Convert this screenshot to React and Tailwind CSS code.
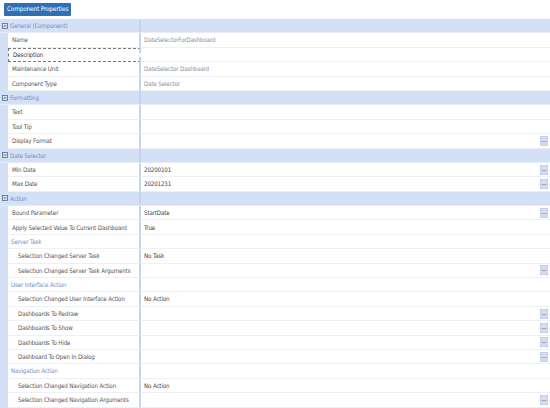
import React from "react";

const rows = [
  { type: "cat", label: "General (Component)" },
  { label: "Name", value: "DateSelectorForDashboard", dim: true },
  { label: "Description", focus: true },
  { label: "Maintenance Unit", value: "DateSelector Dashboard", dim: true },
  { label: "Component Type", value: "Date Selector", dim: true },
  { type: "cat", label: "Formatting" },
  { label: "Text" },
  { label: "Tool Tip" },
  { label: "Display Format", btn: true },
  { type: "cat", label: "Date Selector" },
  { label: "Min Date", value: "20200101", btn: true },
  { label: "Max Date", value: "20201231", btn: true },
  { type: "cat", label: "Action" },
  { label: "Bound Parameter", value: "StartDate", btn: true },
  { label: "Apply Selected Value To Current Dashboard", value: "True" },
  { type: "sub", label: "Server Task" },
  { label: "Selection Changed Server Task", value: "No Task", indent: true },
  { label: "Selection Changed Server Task Arguments", indent: true, btn: true },
  { type: "sub", label: "User Interface Action" },
  { label: "Selection Changed User Interface Action", value: "No Action", indent: true },
  { label: "Dashboards To Redraw", indent: true, btn: true },
  { label: "Dashboards To Show", indent: true, btn: true },
  { label: "Dashboards To Hide", indent: true, btn: true },
  { label: "Dashboard To Open In Dialog", indent: true, btn: true },
  { type: "sub", label: "Navigation Action" },
  { label: "Selection Changed Navigation Action", value: "No Action", indent: true },
  { label: "Selection Changed Navigation Arguments", indent: true, btn: true },
];

// small collapse box drawn next to category names
const Minus = () => (
  <svg width="6" height="6" viewBox="0 0 6 6" className="shrink-0">
    <rect x="0.5" y="0.5" width="5" height="5" fill="none" stroke="#5a6a85" strokeWidth="0.8" />
    <line x1="1.5" y1="3" x2="4.5" y2="3" stroke="#5a6a85" strokeWidth="0.8" />
  </svg>
);

const Ellipsis = () => (
  <div className="flex w-[8px] h-[10px] items-center justify-center bg-[#d3def2] border border-[#c2d0ea]">
    <svg width="4" height="2" viewBox="0 0 4 2">
      <rect x="0" y="1" width="0.8" height="0.8" fill="#55607a" />
      <rect x="1.6" y="1" width="0.8" height="0.8" fill="#55607a" />
      <rect x="3.2" y="1" width="0.8" height="0.8" fill="#55607a" />
    </svg>
  </div>
);

const Row = ({ row }) => {
  if (row.type === "cat") {
    return (
      <div className="flex h-[14.4px] items-center bg-[#d3e0f6] border-b border-[#e6ecf7]">
        <div className="flex w-[141px] items-center gap-[2px] pl-[2px] border-r-2 border-[#c4d3ee] h-full">
          <Minus />
          <span className="text-[#6f8fc4]">{row.label}</span>
        </div>
        <div className="flex-1" />
      </div>
    );
  }
  if (row.type === "sub") {
    return (
      <div className="flex h-[14.4px] items-center">
        <div className="w-[8px] h-full bg-[#d3e0f6]" />
        <div className="flex w-[133px] items-center h-full pl-[3px] border-r-2 border-[#c4d3ee] border-b border-b-[#eef0f4] bg-white">
          <span className="text-[#6f8fc4]">{row.label}</span>
        </div>
        <div className="flex-1 h-full border-b border-[#eef0f4] bg-white" />
      </div>
    );
  }
  return (
    <div className="flex h-[14.4px] items-center">
      <div className="w-[8px] h-full bg-[#d3e0f6]" />
      <div
        className={
          "flex w-[133px] items-center h-full border-r-2 border-r-[#c4d3ee] " +
          (row.focus ? "border border-dashed border-[#777]" : "border-b border-b-[#eef0f4]") +
          (row.indent ? " pl-[10px]" : " pl-[4px]")
        }
      >
        <span className={row.focus ? "text-[#333]" : "text-[#555]"}>{row.label}</span>
      </div>
      <div className="flex flex-1 items-center h-full border-b border-[#eef0f4] pl-[3px] pr-[2px]">
        <span className={row.dim ? "text-[#8a8f9c]" : "text-[#444]"}>{row.value}</span>
        <div className="flex-1" />
        {row.btn && <Ellipsis />}
      </div>
    </div>
  );
};

export default function App() {
  return (
    <div
      className="w-[550px] h-[408px] overflow-hidden bg-white text-[6.2px] tracking-[-0.15px] whitespace-nowrap"
      style={{ fontFamily: "'DejaVu Sans Condensed', sans-serif" }}
    >
      <div className="h-[19px] pt-[3px] pl-[4px]">
        <div className="inline-flex h-[13px] items-center px-[3px] rounded-[1px] bg-[#2f6fb4] text-white text-[6.4px]">
          Component Properties
        </div>
      </div>
      <div>
        {rows.map((r, i) => (
          <Row key={i} row={r} />
        ))}
      </div>
    </div>
  );
}
